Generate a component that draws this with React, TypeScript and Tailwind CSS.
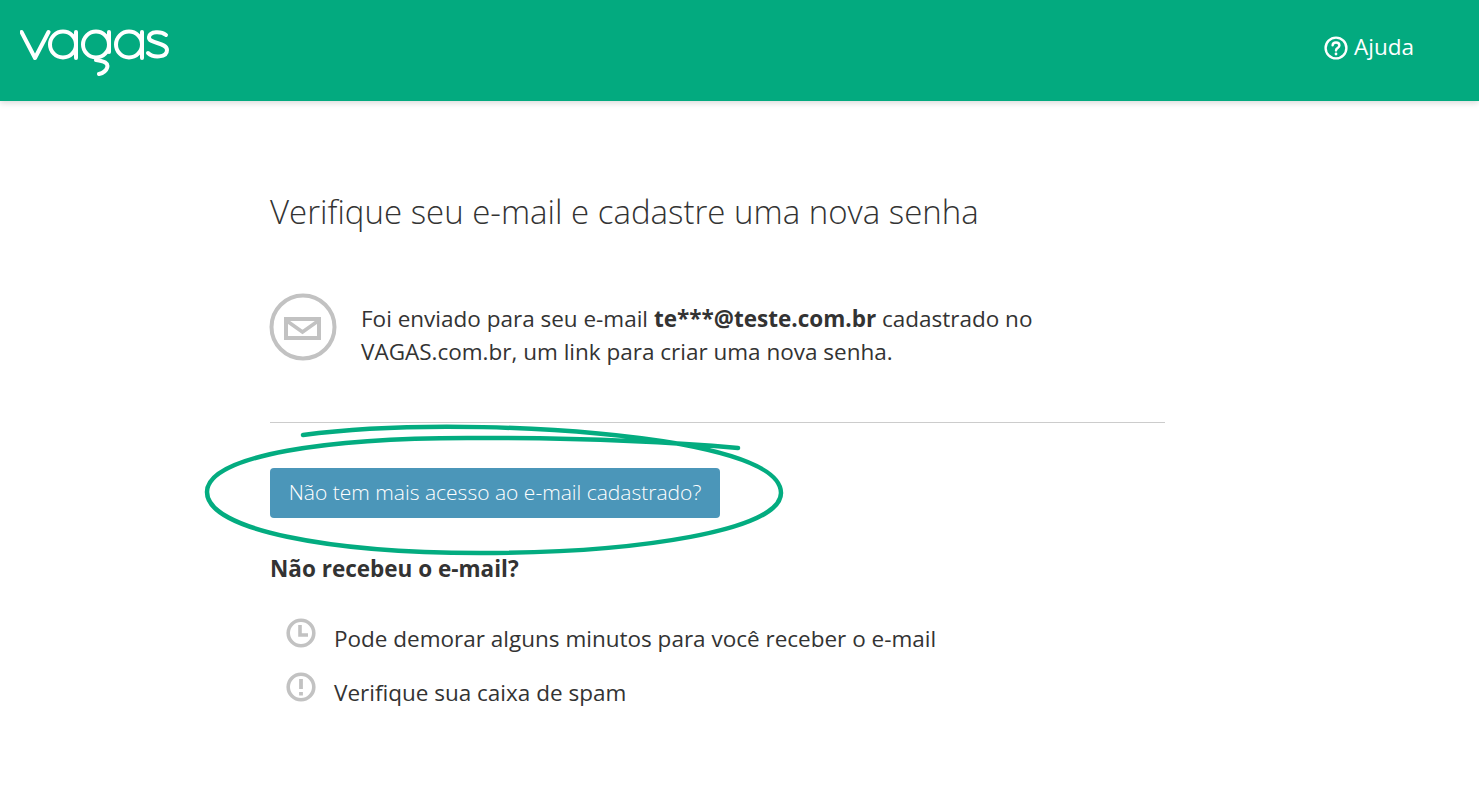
import React from "react";

function VagasLogo() {
  // wordmark drawn from plain strokes
  return (
    <svg viewBox="0 0 150 48" className="w-[150px] h-[48px] mt-[28px] ml-[20px]" fill="none" stroke="#fff" strokeWidth="4" role="img" aria-label="vagas">
      <path d="M1.5 4 L15 30 L28.5 4" strokeLinecap="round" strokeLinejoin="round" />
      <circle cx="43" cy="16.5" r="13" />
      <path d="M56 4 V30" strokeLinecap="round" />
      <circle cx="76" cy="16.5" r="13" />
      <path d="M89 4 V24" strokeLinecap="round" />
      <path d="M76 32 C 84 33 89 35 87 40 C 86 43 83 45 79 46" strokeLinecap="round" />
      <circle cx="109" cy="16.5" r="13" />
      <path d="M122 4 V30" strokeLinecap="round" />
      <path d="M146 7 C 141 3 130 3 129 9 C 128 16 147 14 147 22 C 147 30 133 30 128 25" strokeLinecap="round" />
    </svg>
  );
}

function MailIcon() {
  return (
    <svg viewBox="0 0 68 68" className="w-[68px] h-[68px] shrink-0 -ml-[1px] mr-[1px] blur-[0.7px]" fill="none" stroke="#c2c2c2">
      <circle cx="34" cy="34" r="31.5" strokeWidth="4" />
      <rect x="17" y="26" width="33" height="19" strokeWidth="4" />
      <path d="M18 28 L33.5 39 L49 28" strokeWidth="3.6" />
    </svg>
  );
}

function ClockIcon() {
  return (
    <svg viewBox="0 0 30 30" className="w-[30px] h-[30px] shrink-0 blur-[0.5px]" fill="none" stroke="#c2c2c2" strokeWidth="3.6">
      <circle cx="15" cy="15" r="12.8" />
      <path d="M14 7 V17 H22" />
    </svg>
  );
}

function AlertIcon() {
  return (
    <svg viewBox="0 0 30 30" className="w-[30px] h-[30px] shrink-0 blur-[0.5px]" fill="none" stroke="#c2c2c2" strokeWidth="3.6">
      <circle cx="15" cy="15" r="12.8" />
      <path d="M15 7 V17" strokeWidth="3.8" />
      <path d="M15 20 V23.5" strokeWidth="3.8" />
    </svg>
  );
}

export default function App() {
  return (
    <div className="min-h-[788px] bg-white text-[#333] overflow-hidden font-['Open_Sans',sans-serif]">
      <header className="h-[101px] bg-[#03aa7f] shadow-[0_2px_6px_rgba(0,0,0,0.15)] flex justify-between">
        <VagasLogo />
        <a className="flex items-start gap-[6px] mt-[36px] mr-[65px] text-white text-[22.5px] leading-[22px]">
          <svg viewBox="0 0 24 24" className="w-[24px] h-[24px] mt-[0px]" fill="none" stroke="#fff" strokeWidth="2.4" strokeLinecap="round">
            <circle cx="12" cy="12" r="10.4" />
            <path d="M8.6 9.4 C8.8 5.4 15.4 5.6 15.4 9.4 C15.4 12 12 12 12 14.4" />
            <path d="M12 18 V18.1" strokeWidth="2.8" />
          </svg>
          <span>Ajuda</span>
        </a>
      </header>

      <main className="relative w-[895px] ml-[270px] pt-[88px]">
        <h1 className="text-[33px] leading-[46px] font-light text-[#333]">Verifique seu e-mail e cadastre uma nova senha</h1>

        <div className="flex gap-[23px] mt-[58px] pb-[61px] border-b border-[#ccc]">
          <MailIcon />
          <p className="w-[700px] text-[22.5px] leading-[33px] mt-[9px] -mb-[9px]">
            Foi enviado para seu e-mail <b className="font-bold">te***@teste.com.br</b> cadastrado no VAGAS.com.br, um link para criar uma nova senha.
          </p>
        </div>

        <button className="block mt-[45px] w-[450px] h-[50px] rounded-[4px] bg-[#4b96b9] text-white text-[21px] font-light">
          Não tem mais acesso ao e-mail cadastrado?
        </button>

        <h2 className="mt-[34px] text-[22.5px] leading-[33px] font-bold">Não recebeu o e-mail?</h2>

        <ul className="mt-[33px] ml-[16px] text-[22.5px] leading-[33px] flex flex-col gap-[17px]">
          <li className="flex gap-[18px]">
            <span className="mt-[0px]"><ClockIcon /></span>
            <span className="mt-[4px]">Pode demorar alguns minutos para você receber o e-mail</span>
          </li>
          <li className="flex gap-[18px]">
            <span className="mt-[0px]"><AlertIcon /></span>
            <span className="mt-[4px]">Verifique sua caixa de spam</span>
          </li>
        </ul>

        {/* hand drawn marker round the button */}
        <svg viewBox="0 0 600 150" className="absolute left-0 top-[321px] w-[600px] h-[150px] overflow-visible pointer-events-none" fill="none" stroke="#03ac80" strokeWidth="4.5" strokeLinecap="round">
          <path d="M33 13 C 130 0 290 2 410 22 C 475 34 511 50 511 71 C 511 108 370 131 210 131 C 60 131 -63 108 -63 70 C -63 33 60 15 210 16 C 310 16 400 20 468 26" />
        </svg>
      </main>
    </div>
  );
}
